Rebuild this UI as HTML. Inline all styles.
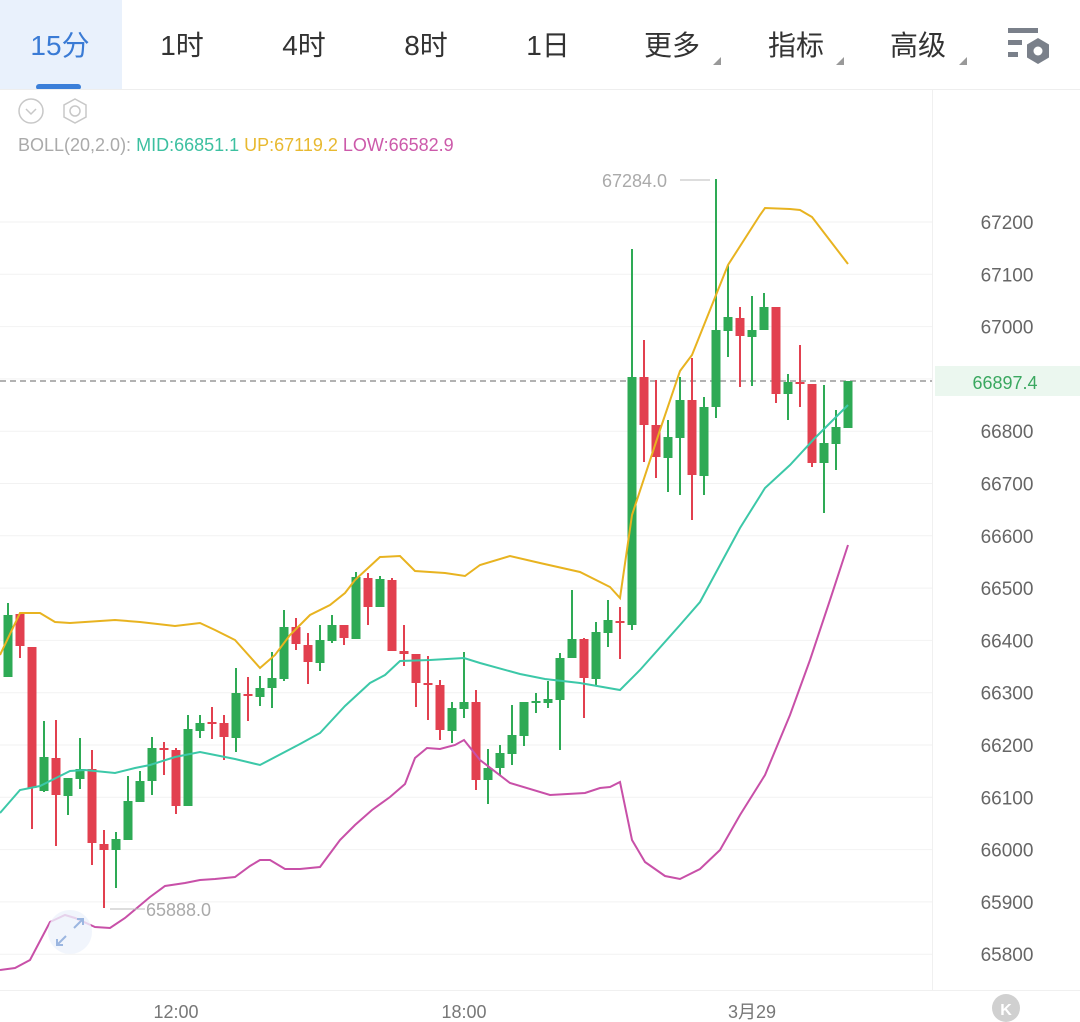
<!DOCTYPE html>
<html><head><meta charset="utf-8"><style>
body{margin:0;width:1080px;height:1022px;overflow:hidden;background:#fff;font-family:"Liberation Sans","Noto Sans CJK SC",sans-serif}
svg{display:block}
</style></head><body>
<svg id="s" width="1080" height="1022" xmlns="http://www.w3.org/2000/svg" font-family="Liberation Sans, Noto Sans CJK SC, sans-serif">
<rect x="0" y="0" width="122" height="89" fill="#e9f1fc"/>
<rect x="36" y="84" width="45" height="6" rx="3" fill="#3b7fd9"/>
<line x1="0" y1="89.5" x2="1080" y2="89.5" stroke="#eeeeee"/>
<g font-size="28" fill="#333" text-anchor="middle">
<text x="60" y="55" fill="#3a7bd5">15分</text>
<text x="182" y="55">1时</text>
<text x="304" y="55">4时</text>
<text x="426" y="55">8时</text>
<text x="548" y="55">1日</text>
<text x="672" y="55">更多</text>
<text x="796" y="55">指标</text>
<text x="918" y="55">高级</text>
</g>
<g fill="#999"><path d="M721 57 L721 65 L713 65Z"/><path d="M844 57 L844 65 L836 65Z"/><path d="M967 57 L967 65 L959 65Z"/></g>
<g fill="#7a808a"><rect x="1008" y="28" width="30" height="5"/><rect x="1008" y="40" width="14" height="5"/><rect x="1008" y="52" width="10" height="5"/>
<path d="M1038 38 L1049 44.5 L1049 57.5 L1038 64 L1027 57.5 L1027 44.5Z"/></g>
<circle cx="1038" cy="51" r="4.5" fill="#fff"/>
<circle cx="31" cy="111" r="12" fill="none" stroke="#c8c8c8" stroke-width="1.5"/>
<path d="M26 109 L31 114 L36 109" fill="none" stroke="#c8c8c8" stroke-width="1.5"/>
<path d="M75 99 L86 105 L86 117 L75 123 L64 117 L64 105Z" fill="none" stroke="#c8c8c8" stroke-width="1.5"/>
<circle cx="75" cy="111" r="5" fill="none" stroke="#c8c8c8" stroke-width="1.5"/>
<text x="18" y="151" font-size="18"><tspan fill="#aaa">BOLL(20,2.0): </tspan><tspan fill="#3cc0a0">MID:66851.1 </tspan><tspan fill="#e8b930">UP:67119.2 </tspan><tspan fill="#cc5aaa">LOW:66582.9</tspan></text>
<line x1="932.5" y1="90" x2="932.5" y2="990" stroke="#f0f0f0"/>
<line x1="0" y1="990.5" x2="1080" y2="990.5" stroke="#f0f0f0"/>
<g id="grid"></g>
<line x1="0" y1="381" x2="932" y2="381" stroke="#999" stroke-width="1.5" stroke-dasharray="6,4"/>
<rect x="935" y="366" width="145" height="30" fill="#ebf7ef"/>
<text x="1005" y="389" font-size="18" fill="#3aa860" text-anchor="middle">66897.4</text>
<g id="c"></g>
<polyline fill="none" stroke="#e8b320" stroke-width="2" points="0,655 20,613 40,613 55,622 70,623 115,620 140,622 175,626 200,623 215,630 235,640 260,668 275,655 290,635 310,615 330,605 345,593 355,580 380,557 400,556 415,571 445,573 465,576 480,565 510,556 540,563 580,572 610,587 620,598 632,515 660,430 680,371 692,355 728,265 760,215 765,208 790,209 800,210 812,217 848,264"/>
<polyline fill="none" stroke="#3cc8a8" stroke-width="2" points="0,813 20,790 40,786 60,776 70,771 85,770 115,773 135,768 150,765 175,757 200,752 220,756 235,759 260,765 300,744 320,733 345,706 370,683 385,675 400,661 430,660 464,658 480,663 520,674 545,679 580,683 620,690 640,670 680,625 700,602 740,528 765,488 790,465 815,438 848,405"/>
<polyline fill="none" stroke="#c850a8" stroke-width="2" points="0,970 15,968 30,960 50,922 65,915 75,918 95,927 110,928 125,918 150,897 165,886 185,883 200,880 215,879 235,877 250,866 260,860 270,860 285,869 300,869 320,867 340,840 355,825 372,810 390,797 405,784 415,758 427,748 440,749 455,745 464,740 480,760 510,783 550,795 585,793 600,788 610,787 620,782 632,840 645,862 665,876 680,879 700,869 720,850 740,815 765,775 790,715 810,660 830,600 848,545"/>
<text x="602" y="187" font-size="18" fill="#aaa">67284.0</text>
<line x1="680" y1="180" x2="710" y2="180" stroke="#bbb"/>
<line x1="110" y1="909" x2="145" y2="909" stroke="#bbb"/>
<text x="146" y="916" font-size="18" fill="#aaa">65888.0</text>
<circle cx="70" cy="932" r="22" fill="#eef3fb" opacity="0.8"/>
<path d="M74 928 L83 919 M77 919 L83 919 L83 925 M66 936 L57 945 M57 939 L57 945 L63 945" fill="none" stroke="#9bb6e0" stroke-width="2"/>
<g font-size="18" fill="#777" text-anchor="middle">
<text x="176" y="1018">12:00</text><text x="464" y="1018">18:00</text><text x="752" y="1018">3月29</text>
</g>
<circle cx="1006" cy="1008" r="14" fill="#d0d0d0"/>
<text x="1006" y="1015" font-size="16" fill="#fff" text-anchor="middle" font-weight="bold">K</text>
</svg>
<script>
var ns="http://www.w3.org/2000/svg";
function el(p,t,a){var e=document.createElementNS(ns,t);for(var k in a)e.setAttribute(k,a[k]);p.appendChild(e);return e;}
var g=document.getElementById('grid');
var prices=[67200,67100,67000,66900,66800,66700,66600,66500,66400,66300,66200,66100,66000,65900,65800];
var s=document.getElementById('s');
prices.forEach(function(p){var y=222+(67200-p)*0.523;
el(g,'line',{x1:0,y1:y,x2:932,y2:y,stroke:'#f2f2f2'});
if(p!=66900){var t=el(g,'text',{x:1007,y:y+7,'font-size':19,fill:'#666','text-anchor':'middle'});t.textContent=p;}});
var C=[[8,'g',615,677,603,677],[20,'r',614,646,614,658],[32,'r',647,788,647,829],[44,'g',757,791,721,792],[56,'r',758,795,720,846],[68,'g',778,796,778,815],[80,'g',769,779,738,789],[92,'r',769,843,750,865],[104,'r',844,850,830,908],[116,'g',839,850,832,888],[128,'g',801,840,776,840],[140,'g',781,802,771,802],[152,'g',748,781,737,795],[164,'r',748,750,742,775],[176,'r',750,806,748,814],[188,'g',729,806,715,806],[200,'g',723,731,715,738],[212,'r',722,724,707,739],[224,'r',723,737,715,760],[236,'g',693,738,668,752],[248,'r',694,696,677,721],[260,'g',688,697,676,706],[272,'g',678,688,652,708],[284,'g',627,679,610,681],[296,'r',627,644,618,650],[308,'r',645,662,633,684],[320,'g',640,663,625,671],[332,'g',625,641,615,643],[344,'r',625,638,625,645],[356,'g',577,639,572,639],[368,'r',578,607,573,625],[380,'g',579,607,576,607],[392,'r',580,651,578,651],[404,'r',651,654,625,666],[416,'r',654,683,654,707],[428,'r',683,685,656,720],[440,'r',685,730,680,740],[452,'g',708,731,702,743],[464,'g',702,709,652,718],[476,'r',702,780,690,790],[488,'g',768,780,749,804],[500,'g',753,768,745,776],[512,'g',735,754,705,765],[524,'g',702,736,702,746],[536,'g',701,703,693,713],[548,'g',699,703,681,708],[560,'g',658,700,653,750],[572,'g',639,658,590,658],[584,'r',639,678,638,718],[596,'g',632,679,622,686],[608,'g',620,633,600,647],[620,'r',621,623,607,659],[632,'g',377,625,249,630],[644,'r',377,425,340,462],[656,'r',425,457,380,478],[668,'g',437,458,420,492],[680,'g',400,438,377,495],[692,'r',400,475,358,520],[704,'g',407,476,397,495],[716,'g',330,407,179,418],[728,'g',317,331,265,357],[740,'r',318,336,307,387],[752,'g',330,337,296,386],[764,'g',307,330,293,330],[776,'r',307,394,307,403],[788,'g',382,394,374,420],[800,'r',382,384,345,407],[812,'r',384,463,384,467],[824,'g',443,463,385,513],[836,'g',427,444,410,470],[848,'g',381,428,381,428]];
var cg=document.getElementById('c');
C.forEach(function(c){var col=c[1]=='g'?'#2eaa55':'#e2404f';
el(cg,'rect',{x:c[0]-1,y:c[4],width:2,height:c[5]-c[4],fill:col});
el(cg,'rect',{x:c[0]-4.5,y:c[2],width:9,height:Math.max(2,c[3]-c[2]),fill:col});});
</script>
</body></html>
